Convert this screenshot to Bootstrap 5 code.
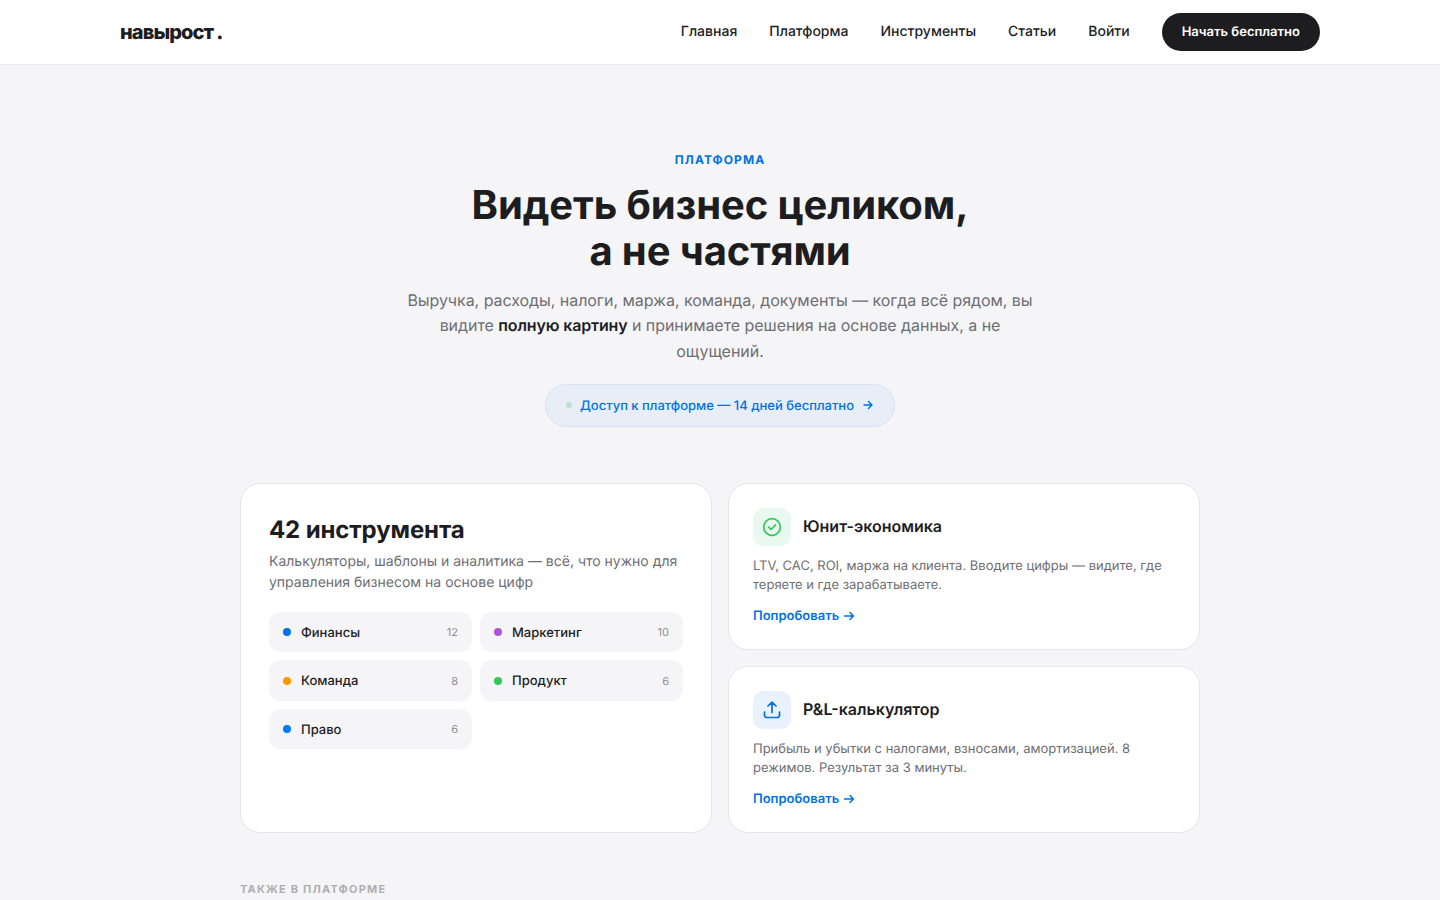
<!doctype html>
<html lang="ru">
<head>
<meta charset="utf-8">
<title>навырост.</title>
<link href="https://cdn.jsdelivr.net/npm/bootstrap@5.3.0/dist/css/bootstrap.min.css" rel="stylesheet">
<style>
body{font-family:Inter,"Noto Sans",sans-serif;background:#f5f5f7;color:#1d1d1f;-webkit-font-smoothing:antialiased;text-rendering:geometricPrecision}
.site-nav{background:#fff;border-bottom:1px solid #ebebee;height:65px}
.site-wrap{width:1200px;height:64px}
.brand{font-size:20px;font-weight:800;letter-spacing:-.045em;color:#1d1d1f;text-decoration:none}
.brand span{margin-left:3px}
.site-nav .nav-link{font-size:14px;font-weight:500;color:#1d1d1f;padding:0 0 1px;margin-right:32px}
.cta{background:#1d1d1f;color:#fff;font-size:13px;font-weight:600;border-radius:20px;padding:0 20px;height:38px;line-height:38px;text-decoration:none}
.main-wrap{width:960px;margin:0 auto}
.hero{padding-top:87px;text-align:center}
.eyebrow{font-size:12px;font-weight:700;letter-spacing:.09em;line-height:15px;color:#0071e3;text-transform:uppercase;margin-bottom:15px}
.hero h1{font-size:40px;line-height:46px;font-weight:700;letter-spacing:-.003em;margin:0 0 13.7px}
.lead-text{width:640px;margin:0 auto 19.3px;font-size:16px;line-height:25.6px;letter-spacing:-.05px;color:#6e6e73}
.lead-text strong{color:#1d1d1f;font-weight:600;letter-spacing:-.15px}
.pill{width:350px;height:43px;border-radius:22px;background:#e8eef7;border:1px solid #d4e3f6;color:#0071e3;font-size:13px;font-weight:500;padding:0 20px;text-decoration:none;white-space:nowrap}
.pill-text{padding-top:2px}
.pill-dot{width:6px;height:6px;border-radius:50%;background:#b9e6c9}
.tile-grid{display:grid;grid-template-columns:472px 472px;gap:16px;margin-top:56px}
.tile{background:#fff;border:1px solid #e5e5ea;border-radius:20px}
.tile-big{grid-row:span 2;padding:28px}
.tile-big h2{font-size:24px;line-height:36px;font-weight:700;letter-spacing:-.005em;margin:0 0 3px}
.tile-big p{font-size:14px;line-height:21px;color:#6e6e73;margin:0 0 19px}
.cat-grid{display:grid;grid-template-columns:203px 203px;gap:8px}
.cat{height:40.5px;background:#f5f5f7;border-radius:12px;padding:0 14px;font-size:13px;line-height:20px;font-weight:500}
.cat-label{padding-top:1px}
.cat-dot{width:8px;height:8px;border-radius:50%;flex:none;margin-right:10px}
.cat-n{font-size:11px;color:#8e8e93;font-weight:400}
.tile-small{height:167px;padding:24px}
.tile-head{margin-bottom:11px}
.ico{width:38px;height:38px;border-radius:10px}
.tile-small h3{font-size:16px;line-height:24px;font-weight:600;margin:0 0 2px;letter-spacing:0}
.tile-small p{font-size:13px;line-height:19.5px;color:#6e6e73;margin:0 0 10px}
.try{font-size:13px;font-weight:600;line-height:20px;color:#0071e3;text-decoration:none}
.also{font-size:11px;font-weight:700;letter-spacing:.11em;line-height:14px;color:#aeaeb2;text-transform:uppercase;margin-top:49px;padding-bottom:40px}
</style>
</head>
<body>
<nav class="site-nav">
  <div class="site-wrap mx-auto d-flex align-items-center">
    <a class="brand me-auto" href="#">навырост<span>.</span></a>
    <a class="nav-link" href="#">Главная</a>
    <a class="nav-link" href="#">Платформа</a>
    <a class="nav-link" href="#">Инструменты</a>
    <a class="nav-link" href="#">Статьи</a>
    <a class="nav-link" href="#">Войти</a>
    <a class="cta" href="#">Начать бесплатно</a>
  </div>
</nav>
<main class="main-wrap">
  <section class="hero">
    <div class="eyebrow">Платформа</div>
    <h1>Видеть бизнес целиком,<br>а не частями</h1>
    <p class="lead-text">Выручка, расходы, налоги, маржа, команда, документы — когда всё рядом, вы видите <strong>полную картину</strong> и принимаете решения на основе данных, а не ощущений.</p>
    <a class="pill d-inline-flex align-items-center gap-2" href="#">
      <span class="pill-dot"></span>
      <span class="pill-text">Доступ к платформе — 14 дней бесплатно</span>
      <svg width="12" height="12" viewBox="0 0 12 12" fill="none" stroke="currentColor" stroke-width="1.4" stroke-linecap="round" stroke-linejoin="round"><path d="M2 6h8M6.5 2.5 10 6l-3.5 3.5"/></svg>
    </a>
  </section>
  <section class="tile-grid">
    <div class="tile tile-big">
      <h2>42 инструмента</h2>
      <p>Калькуляторы, шаблоны и аналитика — всё, что нужно для управления бизнесом на основе цифр</p>
      <div class="cat-grid">
        <div class="cat d-flex align-items-center"><span class="cat-dot" style="background:#0071e3"></span><span class="cat-label me-auto">Финансы</span><span class="cat-n">12</span></div>
        <div class="cat d-flex align-items-center"><span class="cat-dot" style="background:#af52de"></span><span class="cat-label me-auto">Маркетинг</span><span class="cat-n">10</span></div>
        <div class="cat d-flex align-items-center"><span class="cat-dot" style="background:#ff9500"></span><span class="cat-label me-auto">Команда</span><span class="cat-n">8</span></div>
        <div class="cat d-flex align-items-center"><span class="cat-dot" style="background:#34c759"></span><span class="cat-label me-auto">Продукт</span><span class="cat-n">6</span></div>
        <div class="cat d-flex align-items-center"><span class="cat-dot" style="background:#007aff"></span><span class="cat-label me-auto">Право</span><span class="cat-n">6</span></div>
      </div>
    </div>
    <div class="tile tile-small">
      <div class="tile-head d-flex align-items-center gap-2">
        <span class="ico d-flex align-items-center justify-content-center me-1" style="background:#e9f9ef">
          <svg width="20" height="20" viewBox="0 0 20 20" fill="none" stroke="#34c759" stroke-width="1.7" stroke-linecap="round" stroke-linejoin="round"><circle cx="10" cy="10" r="8.3"/><path d="m6.6 10.2 2.4 2.3 4.4-4.6"/></svg>
        </span>
        <h3>Юнит-экономика</h3>
      </div>
      <p>LTV, CAC, ROI, маржа на клиента. Вводите цифры — видите, где теряете и где зарабатываете.</p>
      <a class="try d-flex align-items-center gap-1" href="#">Попробовать
        <svg width="12" height="12" viewBox="0 0 12 12" fill="none" stroke="currentColor" stroke-width="1.5" stroke-linecap="round" stroke-linejoin="round"><path d="M1.5 6h9M7 2.5 10.5 6 7 9.5"/></svg>
      </a>
    </div>
    <div class="tile tile-small">
      <div class="tile-head d-flex align-items-center gap-2">
        <span class="ico d-flex align-items-center justify-content-center me-1" style="background:#e8f1fc">
          <svg width="20" height="20" viewBox="0 0 20 20" fill="none" stroke="#0071e3" stroke-width="1.7" stroke-linecap="round" stroke-linejoin="round"><path d="M2.5 12v3.2a2.3 2.3 0 0 0 2.3 2.3h10.4a2.3 2.3 0 0 0 2.3-2.3V12M10 12.5V2.5M6 6l4-3.8L14 6"/></svg>
        </span>
        <h3>P&amp;L-калькулятор</h3>
      </div>
      <p>Прибыль и убытки с налогами, взносами, амортизацией. 8 режимов. Результат за 3 минуты.</p>
      <a class="try d-flex align-items-center gap-1" href="#">Попробовать
        <svg width="12" height="12" viewBox="0 0 12 12" fill="none" stroke="currentColor" stroke-width="1.5" stroke-linecap="round" stroke-linejoin="round"><path d="M1.5 6h9M7 2.5 10.5 6 7 9.5"/></svg>
      </a>
    </div>
  </section>
  <div class="also">Также в платформе</div>
</main>
<script src="https://cdn.jsdelivr.net/npm/bootstrap@5.3.0/dist/js/bootstrap.bundle.min.js"></script>
</body>
</html>
